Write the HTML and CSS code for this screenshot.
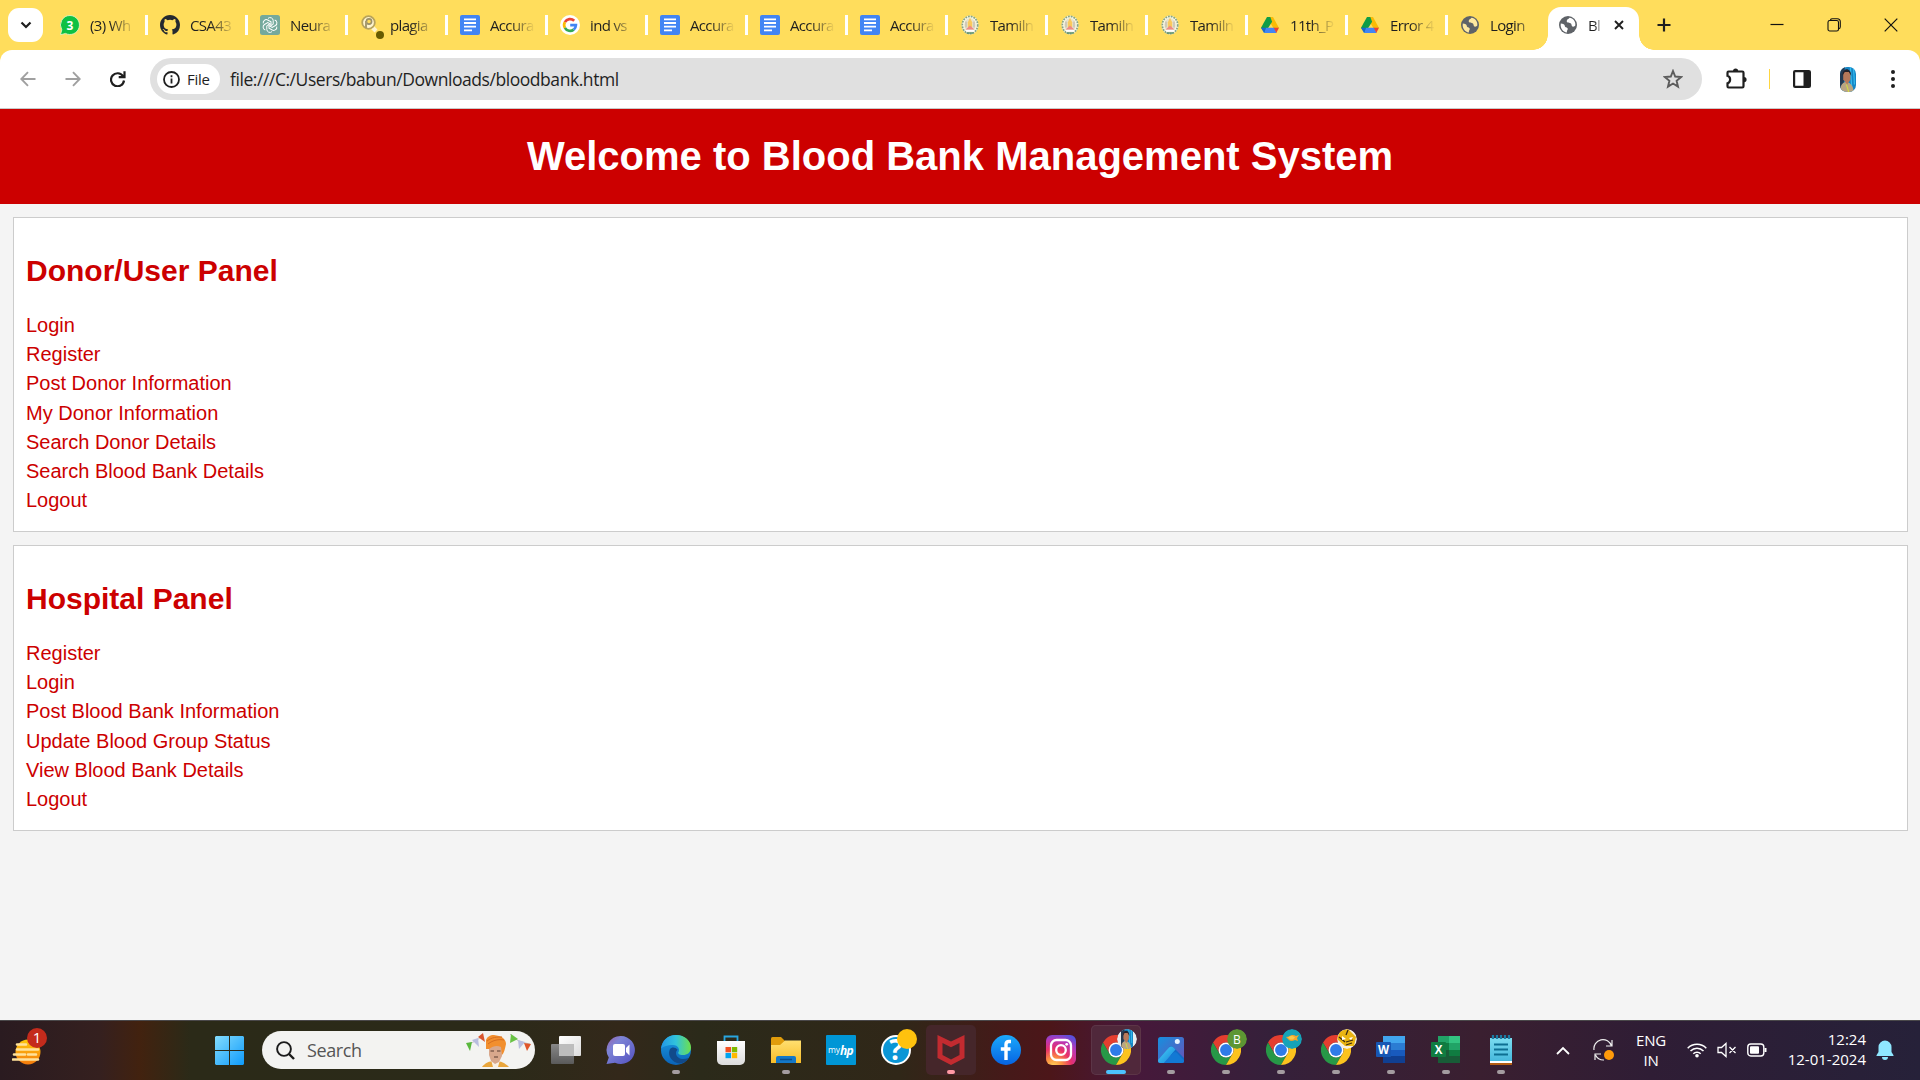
FILE: index.html
```html
<!DOCTYPE html>
<html lang="en">
<head>
<meta charset="utf-8">
<title>Blood Bank Management System</title>
<link rel="stylesheet" href="styles.css">
</head>
<body>
<svg class="defs" aria-hidden="true">
  <defs>
    <linearGradient id="g-win" x1="0" y1="0" x2="1" y2="1"><stop offset="0" stop-color="#83dcfd"/><stop offset="1" stop-color="#0f9bfb"/></linearGradient>
    <linearGradient id="g-sun" x1="0" y1="0" x2="0" y2="1"><stop offset="0" stop-color="#ffc90a"/><stop offset="1" stop-color="#f47a0c"/></linearGradient>
    <linearGradient id="g-chat" x1="0" y1="0" x2="1" y2="1"><stop offset="0" stop-color="#9a5fa8"/><stop offset=".3" stop-color="#7d84d6"/><stop offset="1" stop-color="#5350c0"/></linearGradient>
    <linearGradient id="g-edge" x1="0" y1="0" x2="1" y2="0"><stop offset="0" stop-color="#2296e6"/><stop offset=".5" stop-color="#31c3dc"/><stop offset="1" stop-color="#6ee04b"/></linearGradient>
    <linearGradient id="g-edge2" x1="0" y1="0" x2="0" y2="1"><stop offset="0" stop-color="#1b9de2"/><stop offset="1" stop-color="#0a63b8"/></linearGradient>
    <linearGradient id="g-folder" x1="0" y1="0" x2="0" y2="1"><stop offset="0" stop-color="#ffdf70"/><stop offset="1" stop-color="#f8bd28"/></linearGradient>
    <linearGradient id="g-fb" x1="0" y1="0" x2="0" y2="1"><stop offset="0" stop-color="#1ba9fb"/><stop offset="1" stop-color="#0763e2"/></linearGradient>
    <linearGradient id="g-store" x1="0" y1="0" x2="0" y2="1"><stop offset="0" stop-color="#fff"/><stop offset="1" stop-color="#dcdcdc"/></linearGradient>
    <linearGradient id="g-photo" x1="0" y1="0" x2="1" y2="1"><stop offset="0" stop-color="#1590df"/><stop offset="1" stop-color="#6b51b8"/></linearGradient>
    <linearGradient id="g-hill" x1="0" y1="0" x2="1" y2="1"><stop offset="0" stop-color="#49d2f5"/><stop offset="1" stop-color="#1483dc"/></linearGradient>
    <linearGradient id="g-pane" x1="0" y1="0" x2="1" y2="1"><stop offset="0" stop-color="#fff"/><stop offset="1" stop-color="#dcdcdc"/></linearGradient>
    <linearGradient id="g-pane2" x1="0" y1="0" x2="0" y2="1"><stop offset="0" stop-color="#888"/><stop offset="1" stop-color="#5a5a5a"/></linearGradient>
    <radialGradient id="g-insta" cx=".25" cy="1.05" r="1.15"><stop offset="0" stop-color="#ffd65c"/><stop offset=".25" stop-color="#fc9040"/><stop offset=".52" stop-color="#e8306b"/><stop offset=".78" stop-color="#b837b8"/><stop offset="1" stop-color="#5a50dc"/></radialGradient>
    <linearGradient id="g-note" x1="0" y1="0" x2="0" y2="1"><stop offset="0" stop-color="#7bdcef"/><stop offset="1" stop-color="#44b7dc"/></linearGradient>
    <clipPath id="c-round"><circle cx="10" cy="10" r="10"/></clipPath>
  </defs>
  <symbol id="docs" viewBox="0 0 20 20"><rect width="20" height="20" rx="2" fill="#4285f4"/><path d="M4 4.300h12M4 8h12M4 11.700h12M4 15.400h8" stroke="#fff" stroke-width="1.800"/></symbol>
  <symbol id="emblem" viewBox="0 0 20 20"><ellipse cx="10" cy="10" rx="8.500" ry="9.600" fill="#f8f6e4"/><ellipse cx="10" cy="10" rx="7.700" ry="8.700" fill="none" stroke="#87a583" stroke-width="1.700" stroke-dasharray="1.800 1"/><ellipse cx="10" cy="10" rx="5.800" ry="6.800" fill="#e9e3cd"/><path d="M10 2.800l2.200 4.500V12H7.800V7.300z" fill="#fac95c"/><path d="M6 6.500v6m8-6v6" stroke="#c9c4b4" stroke-width="1.600"/><path d="M5.500 14.500L10 10.500l4.500 4z" fill="#ef8b84"/><path d="M6 15h8v1.600H6z" fill="#fff"/><path d="M6.500 18h7" stroke="#5b8f6c" stroke-width="1.500"/></symbol>
  <symbol id="drive" viewBox="0 0 20 20"><path d="M7 2h6l6 11h-5.700z" fill="#fbbc04"/><path d="M7 2h3.300l1.800 4.700L5 18 1 12.800z" fill="#0f9d46"/><path d="M5.800 12.800h8.800L16.500 18H4z" fill="#4285f4"/><path d="M1 12.800h5L4 18z" fill="#1967d2"/><path d="M13.800 12.800H19L16.300 18z" fill="#ea4335"/></symbol>
  <symbol id="globe" viewBox="0 0 20 20"><circle cx="10" cy="10" r="9" fill="#5f6368"/><path class="land" d="M2.800 8.500c2.200.2 4.200.9 4 2.600-.1 1.500 1.800.8 2.800 2.200.8 1.200-1 2.200-.7 4.200C5 17.200 2 13 2.800 8.500zM11.500 2.800c-1 1.500-2.800 1.500-2.800 3.400 0 1.800 3.200 1 4.300 2.300 1 1.200.2 2.900 2 3.200 1 .1 1.800-.5 2.300-1.200C18 6.500 15 3.300 11.500 2.800z"/></symbol>
  <symbol id="chrome" viewBox="0 0 48 48"><path d="M44.800 12H24A12 12 0 0 0 13.600 30L3.200 12A24 24 0 0 1 44.800 12z" fill="#e43e2f"/><path d="M3.200 12L13.600 30A12 12 0 0 0 34.400 30L24 48A24 24 0 0 1 3.200 12z" fill="#279847"/><path d="M44.800 12H24A12 12 0 0 1 34.400 30L24 48A24 24 0 0 0 44.800 12z" fill="#fcc31e"/><circle cx="24" cy="24" r="12" fill="#fff"/><circle cx="24" cy="24" r="9.500" fill="#2f7be8"/></symbol>
  <symbol id="portrait" viewBox="0 0 20 20" preserveAspectRatio="none"><rect width="20" height="20" fill="#1685c4"/><path d="M0 0h6l-2 20H0z" fill="#263a52"/><path d="M13 0l2 20m2-19l1 13" stroke="#35bdef" stroke-width="1.500"/><path d="M0 20c0-6 4-8 8-8s9 3 9 8z" fill="#baa582"/><path d="M4 4h9v6l-4 4-5-4z" fill="#b87859"/><path d="M3 7c0-7 11-7 11 0l-3-3H6z" fill="#26222b"/><path d="M8 14l3 6" stroke="#d5e33a" stroke-width="1.200"/></symbol>
</svg>

<div class="screen">
  <header class="tabstrip">
    <button class="tab-search"><svg width="12" height="8" viewBox="0 0 12 8"><path d="M1.500 1.500L6 6l4.500-4.500" fill="none" stroke="#1f1f1f" stroke-width="2.200"/></svg></button>
    <div class="tabs">
      <div class="tab"><svg class="fav" viewBox="0 0 20 20"><path d="M10 .5a9.500 9.500 0 1 1-4.500 17.900L.5 19.800l1.300-5A9.500 9.500 0 0 1 10 .5z" fill="#0dc143" stroke="#e9f7cf" stroke-width=".8"/><text class="wa-num" x="10" y="14.500">3</text></svg><span>(3) Wh</span></div>
      <div class="tab"><svg class="fav" viewBox="0 0 16 16"><path fill="#24292f" d="M8 0C3.580 0 0 3.580 0 8c0 3.540 2.290 6.530 5.470 7.590.4.070.55-.17.55-.38 0-.19-.01-.82-.01-1.490-2.010.37-2.530-.49-2.690-.94-.09-.23-.48-.94-.82-1.130-.28-.15-.68-.52-.01-.53.63-.01 1.080.58 1.230.82.72 1.210 1.870.87 2.330.66.07-.52.28-.87.51-1.070-1.780-.2-3.640-.89-3.640-3.950 0-.87.31-1.590.82-2.150-.08-.2-.36-1.020.08-2.120 0 0 .67-.21 2.200.82a7.600 7.600 0 0 1 4 0c1.530-1.040 2.200-.82 2.200-.82.44 1.100.16 1.920.08 2.120.51.56.82 1.270.82 2.150 0 3.070-1.870 3.750-3.650 3.950.29.25.54.73.54 1.480 0 1.070-.01 1.930-.01 2.200 0 .21.15.46.55.38A8.010 8.010 0 0 0 16 8c0-4.420-3.580-8-8-8z"/></svg><span>CSA43</span></div>
      <div class="tab"><svg class="fav" viewBox="0 0 20 20"><rect width="20" height="20" rx="2.500" fill="#75a99c"/><g fill="none" stroke="#fff" stroke-width="1"><g id="petal"><path d="M8 3.400A3.100 3.100 0 0 1 13.200 5.500v3.800L10 11.200"/></g><use href="#petal" transform="rotate(60 10 10)"/><use href="#petal" transform="rotate(120 10 10)"/><use href="#petal" transform="rotate(180 10 10)"/><use href="#petal" transform="rotate(240 10 10)"/><use href="#petal" transform="rotate(300 10 10)"/></g></svg><span>Neura</span></div>
      <div class="tab"><svg class="fav wide" viewBox="0 0 24 24"><path d="M12 12l4 4" stroke="#fff5cf" stroke-width="4"/><circle cx="8.500" cy="7.500" r="6.300" fill="#fff5cf" stroke="#b7a35c" stroke-width="1.800"/><circle cx="9" cy="6.500" r="2.600" fill="#ffdd5c" stroke="#9b9069" stroke-width="1.600"/><path d="M6 6v7" stroke="#a79b70" stroke-width="2"/><circle cx="20" cy="20" r="4" fill="#665b00"/></svg><span>plagia</span></div>
      <div class="tab"><svg class="fav"><use href="#docs"/></svg><span>Accura</span></div>
      <div class="tab"><svg class="fav" viewBox="0 0 20 20"><circle cx="10" cy="10" r="10" fill="#fff"/><g fill="none" stroke-width="2.700"><path d="M14.200 5.800A5.900 5.900 0 0 0 4.900 7.100" stroke="#ea4335"/><path d="M4.900 7.100a5.900 5.900 0 0 0 0 5.800" stroke="#fbbc05"/><path d="M4.900 12.900a5.900 5.900 0 0 0 8.800 1.700" stroke="#34a853"/><path d="M13.700 14.600A5.900 5.900 0 0 0 15.900 10.200H10.200" stroke="#4285f4"/></g></svg><span>ind vs</span></div>
      <div class="tab"><svg class="fav"><use href="#docs"/></svg><span>Accura</span></div>
      <div class="tab"><svg class="fav"><use href="#docs"/></svg><span>Accura</span></div>
      <div class="tab"><svg class="fav"><use href="#docs"/></svg><span>Accura</span></div>
      <div class="tab"><svg class="fav"><use href="#emblem"/></svg><span>Tamiln</span></div>
      <div class="tab"><svg class="fav"><use href="#emblem"/></svg><span>Tamiln</span></div>
      <div class="tab"><svg class="fav"><use href="#emblem"/></svg><span>Tamiln</span></div>
      <div class="tab"><svg class="fav"><use href="#drive"/></svg><span>11th_P</span></div>
      <div class="tab"><svg class="fav"><use href="#drive"/></svg><span>Error 4</span></div>
      <div class="tab last"><svg class="fav"><use href="#globe"/></svg><span>Login</span></div>
      <div class="tab active"><svg class="fav"><use href="#globe"/></svg><span>Bl</span><svg class="close" viewBox="0 0 10 10"><path d="M1 1l8 8M9 1L1 9" stroke="#1f1f1f" stroke-width="1.900"/></svg></div>
    </div>
    <svg class="newtab" viewBox="0 0 14 14"><path d="M7 .5v13M.5 7h13" stroke="#1f1f1f" stroke-width="2.200"/></svg>
    <div class="window-controls">
      <svg width="14" height="14" viewBox="0 0 14 14"><path d="M.5 6.500h13" stroke="#111" stroke-width="1.200"/></svg>
      <svg width="14" height="14" viewBox="0 0 14 14"><g fill="none" stroke="#111" stroke-width="1.100"><rect x="1" y="2.500" width="10.500" height="10.500" rx="1.800"/><path d="M3.500 2.500C3.500 1 4.500.7 5.500.7h4.700c2 0 3.100 1.100 3.100 3.100v5c0 1-.5 1.800-1.500 2"/></g></svg>
      <svg width="14" height="14" viewBox="0 0 14 14"><path d="M.7.700l12.600 12.600M13.300.700L.7 13.300" stroke="#111" stroke-width="1.200"/></svg>
    </div>
  </header>

  <div class="toolbar-back">
    <nav class="toolbar">
      <div class="nav-icons">
        <svg width="16" height="16" viewBox="0 0 16 16"><path d="M15.500 8H1.500M8 1.200L1.300 8 8 14.800" fill="none" stroke="#a0a0a0" stroke-width="1.900"/></svg>
        <svg width="16" height="16" viewBox="0 0 16 16"><path d="M.5 8h14M8 1.200L14.700 8 8 14.800" fill="none" stroke="#a0a0a0" stroke-width="1.900"/></svg>
        <svg width="16" height="16" viewBox="0 0 16 16"><path d="M13 5.200A6.500 6.500 0 1 0 14 9.500M14.500.3v5.800H8.700" fill="none" stroke="#1f1f1f" stroke-width="2.200"/></svg>
      </div>
      <div class="omnibox">
        <div class="chip"><svg width="17" height="17" viewBox="0 0 17 17"><circle cx="8.500" cy="8.500" r="7.500" fill="none" stroke="#1f1f1f" stroke-width="1.800"/><path d="M8.500 7.500v5M8.500 4.300v1.900" stroke="#1f1f1f" stroke-width="1.800"/></svg><span>File</span></div>
        <span class="url">file:///C:/Users/babun/Downloads/bloodbank.html</span>
        <svg class="star" width="20" height="20" viewBox="0 0 20 20"><path d="M10 2l2.200 5.500 5.900.5-4.500 3.800 1.400 5.800L10 14.500l-5 3.100 1.400-5.800L1.900 8l5.900-.5z" fill="none" stroke="#5c5c5c" stroke-width="1.900"/></svg>
      </div>
      <div class="actions">
        <svg width="22" height="22" viewBox="0 0 22 22"><path d="M3.500 3.500h13.800c.7 0 1.200.5 1.200 1.200v13.600c0 .7-.5 1.200-1.200 1.200H3.500c-.7 0-1-.5-1-1.200v-3c3.500-1 3.500-6.500 0-7.500V4.700c0-.7.300-1.200 1-1.200z" fill="none" stroke="#1f1f1f" stroke-width="2.200"/><path d="M8 3a2.600 2.600 0 0 1 5.200 0zM19 9a2.600 2.600 0 0 1 0 5.200z" fill="#1f1f1f"/></svg>
        <i class="rule"></i>
        <svg width="18" height="18" viewBox="0 0 18 18"><rect x="1.100" y="1.100" width="15.800" height="15.800" rx="1" fill="none" stroke="#1f1f1f" stroke-width="2.200"/><path d="M10.500 1H17v16h-6.500z" fill="#1f1f1f"/></svg>
        <svg class="avatar"><use href="#portrait"/></svg>
        <svg class="dots" width="6" height="20" viewBox="0 0 6 20"><g fill="#1f1f1f"><circle cx="3" cy="3" r="2"/><circle cx="3" cy="10" r="2"/><circle cx="3" cy="17" r="2"/></g></svg>
      </div>
    </nav>
  </div>

  <main class="page">
    <h1 class="banner">Welcome to Blood Bank Management System</h1>
    <section class="panel">
      <h2>Donor/User Panel</h2>
      <ul>
        <li><a>Login</a></li>
        <li><a>Register</a></li>
        <li><a>Post Donor Information</a></li>
        <li><a>My Donor Information</a></li>
        <li><a>Search Donor Details</a></li>
        <li><a>Search Blood Bank Details</a></li>
        <li><a>Logout</a></li>
      </ul>
    </section>
    <section class="panel">
      <h2>Hospital Panel</h2>
      <ul>
        <li><a>Register</a></li>
        <li><a>Login</a></li>
        <li><a>Post Blood Bank Information</a></li>
        <li><a>Update Blood Group Status</a></li>
        <li><a>View Blood Bank Details</a></li>
        <li><a>Logout</a></li>
      </ul>
    </section>
  </main>

  <footer class="taskbar">
    <svg class="widgets" width="36" height="40" viewBox="0 0 36 40"><circle cx="16" cy="24" r="12.500" fill="url(#g-sun)"/><path d="M5 16.500h9M5 21.500h21M2 26.500h11m3 0h8M1 31.500h25" stroke="#ffe29a" stroke-width="2.600" stroke-linecap="round"/><circle cx="25" cy="10" r="10" fill="#c42b1c"/><text class="badge-num" x="25" y="15">1</text></svg>
    <svg class="start" width="29" height="29" viewBox="0 0 29 29"><path d="M1 0h13v14H0V1zM15 0h13l1 1v13H15zM0 15h14v14H1l-1-1zM15 15h14v13l-1 1H15z" fill="url(#g-win)"/></svg>
    <div class="search">
      <svg width="19" height="19" viewBox="0 0 19 19"><circle cx="8" cy="8" r="6.900" fill="none" stroke="#1b1b1b" stroke-width="1.900"/><path d="M13 13l5 5" stroke="#1b1b1b" stroke-width="2.400"/></svg>
      <span>Search</span>
      <svg class="art" width="66" height="38" viewBox="0 0 66 38"><path d="M1 13Q12 11 17 3M44 3q6 8 20 10" fill="none" stroke="#aaa" stroke-width=".7"/><path d="M0 12l6-1-2 9z" fill="#59b83d"/><path d="M6 9l6-2 1 9z" fill="#b9bddf"/><path d="M12 6l5-4 2 9z" fill="#d9562f"/><path d="M45 3l7 5-8 4z" fill="#6ac345"/><path d="M52 9l7 2-6 7z" fill="#b9bddf"/><path d="M58 12l7 1-4 7z" fill="#e0552b"/><path d="M16 36c3-4 7-6 13-6s10 2 14 6z" fill="#e9a63c"/><path d="M25 29h9l-2 7h-5z" fill="#f8efe4"/><path d="M23 15h13v10l-3 6-4 2-4-3-2-6z" fill="#d9a88c"/><path d="M23 18h-3V9c1-3 4-5 8-5l5 1c4 1 7 4 7 8-1 5-2 9-4 11l-1-8c-4-2-8-1-12 2z" fill="#f28f2e"/><path d="M22 13c5-4 11-5 16-4M21 10c5-4 10-4 15-4" fill="none" stroke="#d66e1f"/><path d="M24.500 20h3.500m3 0h3.500M28 26h4" stroke="#5b3c31" stroke-width="1.200"/></svg>
    </div>
    <div class="apps">
      <div class="app"><svg viewBox="0 0 30 30"><rect x="8" y="1" width="22" height="20" rx="1" fill="url(#g-pane)"/><rect y="9" width="23" height="20" rx="1" fill="url(#g-pane2)"/><path d="M8 9h15v12H8z" fill="#bdbdbd"/></svg></div>
      <div class="app"><svg viewBox="0 0 30 30"><path d="M15 1a14 14 0 1 1-6 26.700L.5 29l2.300-6.500A14 14 0 0 1 15 1z" fill="url(#g-chat)"/><rect x="7" y="9" width="12" height="12" rx="2" fill="#fff"/><path d="M20 13l3.500-3.500v11L20 17z" fill="#fff"/></svg></div>
      <div class="app run"><svg viewBox="0 0 30 30"><circle cx="15" cy="15" r="15" fill="url(#g-edge2)"/><path d="M0 14C1 5 7 0 15 0c9 0 15 6 15 12.500 0 5-4 7.500-8 7.500-4 0-5.500-1.500-4.500-3 1.500-2 0-7-5.500-7C6 10 1 12 0 14z" fill="url(#g-edge)"/><path d="M9 14c-2 4-1 11 7 14 5 1.500 9-1 11.500-5-6 2.500-12 .5-12.500-4.500 0-1.700.6-2.700 1.600-3.700C14 11.500 10.500 12 9 14z" fill="#114a8b"/></svg></div>
      <div class="app"><svg viewBox="0 0 30 30"><path d="M8.500 8V1.500h13V8" fill="none" stroke="#28a6e0" stroke-width="1.800"/><path d="M1 6h28v19a5 5 0 0 1-5 5H6a5 5 0 0 1-5-5z" fill="url(#g-store)"/><path d="M9.500 12H15v5.300H9.500z" fill="#f25022"/><path d="M15.800 12h5.400v5.300h-5.400z" fill="#7fba00"/><path d="M9.500 18H15v5.200H9.500z" fill="#00a4ef"/><path d="M15.800 18h5.400v5.200h-5.400z" fill="#ffb900"/></svg></div>
      <div class="app run"><svg viewBox="0 0 30 30"><path d="M0 3.500Q0 2 1.500 2H10l4 4v5H0z" fill="#e09c0b"/><path d="M0 10h9l5-4.500h16V28H0z" fill="url(#g-folder)"/><path d="M5 28v-5q0-2 2-2h16q2 0 2 2v5z" fill="#1478c8"/><path d="M9 24.500h12" stroke="#0b4e8e" stroke-width="1.500"/></svg></div>
      <div class="app"><svg viewBox="0 0 30 30"><rect width="30" height="30" rx="1" fill="#0096d6"/><text class="hp-my" x="2" y="18">my</text><text class="hp" x="14" y="19.500">hp</text></svg></div>
      <div class="app"><svg viewBox="0 0 30 30"><circle cx="15" cy="15" r="14" fill="#0b96d6" stroke="#fff" stroke-width="2"/><text class="help" x="15" y="25">?</text></svg><i class="badge gold"></i></div>
      <div class="app run alert"><svg viewBox="0 0 30 30"><path d="M1.500 0L15 6.500 28.500 0v23L15 30 1.500 23zM6.500 8v12L15 24.500 23.500 20V8L15 12.200z" fill="#c22b30" fill-rule="evenodd"/></svg></div>
      <div class="app"><svg viewBox="0 0 30 30"><circle cx="15" cy="15" r="15" fill="url(#g-fb)"/><path d="M20 6.500h-2c-2 0-3 1-3 3V25M9.800 14h9.700" fill="none" stroke="#fff" stroke-width="3.400"/></svg></div>
      <div class="app"><svg viewBox="0 0 30 30"><rect width="30" height="30" rx="6" fill="url(#g-insta)"/><g fill="none" stroke="#fff" stroke-width="2.300"><rect x="5" y="5" width="20" height="20" rx="5.500"/><circle cx="15" cy="15" r="4.800"/></g><circle cx="20.700" cy="9.300" r="1.400" fill="#fff"/></svg></div>
      <div class="app run current"><svg><use href="#chrome"/></svg><svg class="badge" viewBox="0 0 20 20"><circle cx="10" cy="10" r="10" fill="#e8edf0"/><g clip-path="url(#c-round)"><use href="#portrait" x="4" y="0" width="12" height="20"/></g></svg></div>
      <div class="app run"><svg viewBox="0 0 30 30"><rect x="2" y="2" width="26" height="26" rx="2.500" fill="url(#g-photo)"/><path d="M13 12q2-1.500 4 0l11 11v2.500a2.500 2.500 0 0 1-2.500 2.500h-5L11 16z" fill="#116ac6"/><path d="M2.500 24.500L13 12.500q2-2 4.500 0l2 2L8 28H4.500A2.500 2.500 0 0 1 2 25.500z" fill="url(#g-hill)"/><path d="M8 28L17 18q2-2 4 0l7 7.500a2.500 2.500 0 0 1-2.500 2.500z" fill="#1279d4"/><circle cx="21.300" cy="6.500" r="2.500" fill="#e6f4ff"/></svg></div>
      <div class="app run"><svg><use href="#chrome"/></svg><svg class="badge" viewBox="0 0 20 20"><circle cx="10" cy="10" r="10" fill="#5d9633"/><text class="badge-b" x="10" y="14.500">B</text></svg></div>
      <div class="app run"><svg><use href="#chrome"/></svg><svg class="badge" viewBox="0 0 20 20"><circle cx="10" cy="10" r="10" fill="#16a3b8"/><path d="M4 8l3-.5c2-2 5-2 7-.5l3-1-2 3 1 3-3-1c-3 1.500-5 1-6 0z" fill="#f2a52c"/><path d="M6 8.500c2-2 5-2 7 0l-2 2H8z" fill="#f6c84a"/></svg></div>
      <div class="app run"><svg><use href="#chrome"/></svg><svg class="badge" viewBox="0 0 20 20"><g clip-path="url(#c-round)"><path fill="#f5efe0" d="M0 0h20v20H0z"/><path d="M3 2l8-2 8 8-2 9-9 0-8-7z" fill="#eab512"/><path d="M2 8l6 5M9 13l7-2M9 16l6-2M11 1L9 6" stroke="#3c2c13" stroke-width="1.300"/><path d="M5 7l4 3-4 1zM12 9l4-1-2 3z" fill="#fff"/></g></svg></div>
      <div class="app run"><svg viewBox="0 0 30 30"><path d="M7 1h22v7H7z" fill="#41a5ee"/><path d="M7 8h22v7H7z" fill="#2b7cd3"/><path d="M7 15h22v6H7z" fill="#185abd"/><path d="M7 21h22v7H7z" fill="#103f91"/><rect y="7" width="15" height="15" rx="1" fill="#1757b4"/><text class="office" x="7.500" y="18.500">W</text></svg></div>
      <div class="app run"><svg viewBox="0 0 30 30"><path d="M7 1h11v7H7z" fill="#21a366"/><path d="M18 1h11v7H18z" fill="#33c481"/><path d="M7 8h11v7H7z" fill="#107c41"/><path d="M18 8h11v7H18z" fill="#21a366"/><path d="M18 15h11v6H18z" fill="#107c41"/><path d="M7 15h11v13H7zM18 21h11v7H18z" fill="#185c37"/><rect y="7" width="15" height="15" rx="1" fill="#107c41"/><text class="office" x="7.500" y="18.500">X</text></svg></div>
      <div class="app run"><svg viewBox="0 0 30 30"><path d="M4 3h22v24H4z" fill="url(#g-note)"/><path d="M4 26h22v2H4z" fill="#fff"/><path d="M4 28h22v2H4z" fill="#b45d13"/><path d="M8 9.500h14M8 14.500h14M8 19.500h14" stroke="#0d6f92" stroke-width="1.900"/><path d="M7 0v4M11 0v4M15 0v4M19 0v4M23 0v4" stroke="#1a7ba3" stroke-width="2.300"/></svg></div>
    </div>
    <div class="tray">
      <svg class="chev" width="14" height="9" viewBox="0 0 14 9"><path d="M1 8l6-6 6 6" fill="none" stroke="#fff" stroke-width="1.800"/></svg>
      <svg class="sync" width="22" height="22" viewBox="0 0 22 22"><path d="M1 11A9 9 0 0 1 18.500 7M19 1v6h-6M2 21v-6h6M2.500 16A9 9 0 0 0 11 21" fill="none" stroke="#eee" stroke-width="1.200"/><circle cx="16" cy="16" r="5" fill="#ff9a0a"/></svg>
      <div class="lang"><span>ENG</span><span>IN</span></div>
      <div class="status">
        <svg width="20" height="16" viewBox="0 0 20 16"><g fill="none" stroke="#fff" stroke-width="1.500"><path d="M.7 6.200a13 13 0 0 1 18.600 0M3.500 9a9 9 0 0 1 13 0M6.300 11.800a5 5 0 0 1 7.400 0"/></g><circle cx="10" cy="13.700" r="1.800" fill="#fff"/></svg>
        <svg width="20" height="16" viewBox="0 0 20 16"><path d="M1 5.500h3.500L9 1.500v13L4.500 10.500H1zM12.500 5l6 6M18.500 5l-6 6" fill="none" stroke="#fff" stroke-width="1.300"/></svg>
        <svg width="20" height="14" viewBox="0 0 20 14"><rect x=".8" y="1" width="16" height="12" rx="3" fill="none" stroke="#fff" stroke-width="1.400"/><rect x="3" y="3.200" width="9" height="7.600" rx="1" fill="#fff"/><path d="M18.500 5v4" stroke="#fff" stroke-width="2"/></svg>
      </div>
      <div class="clock"><span>12:24</span><span>12-01-2024</span></div>
      <svg class="bell" width="18" height="20" viewBox="0 0 18 20"><path d="M9 .5a6.500 6.500 0 0 1 6.500 6.500v5l2 3.200v.8H.5v-.8l2-3.200V7A6.500 6.500 0 0 1 9 .5zM6 17h6a3 3 0 0 1-6 0z" fill="#8fe7ff"/></svg>
    </div>
  </footer>
</div>
</body>
</html>
```
FILE: styles.css
```css
* { box-sizing: border-box; }
body { margin: 0; font-family: "Open Sans", "Noto Sans", sans-serif; color: #1f1f1f; overflow: hidden; }
svg { display: block; flex: none; }
.defs { position: absolute; width: 0; height: 0; }
.screen { width: 1920px; height: 1080px; display: flex; flex-direction: column; background: #f4f4f4; }

/* Tab strip */
.tabstrip { height: 50px; flex: none; background: #ffdd5c; display: flex; align-items: center; padding-left: 8px; }
.tab-search { width: 35px; height: 34px; border: 0; border-radius: 11px; background: #fff; padding: 0; display: grid; place-items: center; }
.tabs { display: flex; align-items: center; margin-left: 5px; height: 50px; }
.tab { width: 100px; height: 20px; padding-left: 12px; display: flex; align-items: center; border-right: 3px solid #fff; }
.tab span { width: 48px; margin-left: 10px; white-space: nowrap; font-size: 15px; line-height: 20px; letter-spacing: -.65px; -webkit-mask-image: linear-gradient(90deg, #000 20px, transparent 45px); mask-image: linear-gradient(90deg, #000 20px, transparent 45px); }
.fav { width: 20px; height: 20px; }
.fav.wide { width: 24px; height: 24px; margin: 4px -4px 0 0; }
.land { fill: var(--land, #ffe9a0); }
.tab.last { border: 0; }
.tab.last span { -webkit-mask-image: linear-gradient(90deg, #000 25px, rgba(0, 0, 0, .4) 38px); mask-image: linear-gradient(90deg, #000 25px, rgba(0, 0, 0, .4) 38px); }
.tab.active { --land: #fff; position: relative; width: 91px; height: 43px; margin-top: 7px; padding: 0 0 7px 10px; border: 0; background: #fff; border-radius: 13px 13px 0 0; }
.tab.active span { width: 14px; -webkit-mask-image: linear-gradient(90deg, #000 6px, rgba(0, 0, 0, .3) 13px); mask-image: linear-gradient(90deg, #000 6px, rgba(0, 0, 0, .3) 13px); }
.tab.active::before, .tab.active::after { content: ""; position: absolute; bottom: 0; width: 15px; height: 15px; }
.tab.active::before { left: -15px; background: radial-gradient(circle at 0 0, transparent 14.5px, #fff 15px); }
.tab.active::after { right: -15px; background: radial-gradient(circle at 100% 0, transparent 14.5px, #fff 15px); }
.close { width: 10px; height: 10px; margin-left: 12px; }
.newtab { width: 14px; height: 14px; margin-left: 18px; }
.window-controls { display: flex; gap: 43px; margin-left: auto; padding-right: 22px; }
.wa-num { font: bold 12px "Open Sans", sans-serif; fill: #fff; text-anchor: middle; }

/* Toolbar */
.toolbar-back { height: 59px; flex: none; background: #ffdd5c; }
.toolbar { height: 59px; background: #fff; border-radius: 12px 12px 0 0; border-bottom: 1px solid #c9c9c9; display: flex; align-items: center; padding-left: 20px; }
.nav-icons { display: flex; gap: 29px; width: 130px; }
.omnibox { width: 1552px; height: 42px; border-radius: 21px; background: #e0e0e0; display: flex; align-items: center; padding: 0 19px 0 7px; }
.chip { width: 63px; height: 30px; border-radius: 15px; background: #fff; display: flex; align-items: center; gap: 7px; padding-left: 6px; font-size: 15px; letter-spacing: -.3px; }
.url { margin-left: 10px; font-size: 17.5px; letter-spacing: -.44px; white-space: nowrap; }
.star { margin-left: auto; }
.actions { flex: 1; display: flex; align-items: center; padding-left: 23px; }
.rule { width: 1px; height: 20px; margin: 0 23px 0 22px; background: #ffd640; }
.avatar { width: 16px; height: 25px; margin-left: 29px; border-radius: 7px; }
.dots { margin-left: 34px; }

/* Blood bank page */
.page { flex: 1; min-height: 0; background: #f4f4f4; font-family: Arial, "Liberation Sans", sans-serif; font-size: 20px; color: #c00; }
.banner { margin: 0; height: 95px; padding: 25px; line-height: 45px; font-size: 40px; text-align: center; background: #c00; color: #fff; }
.panel { margin: 12.5px; padding: 12.5px; border: 1px solid #ccc; background: #fff; }
.panel h2 { margin: 24.4px 0 25.4px; font-size: 30px; line-height: 34px; }
.panel ul { list-style: none; margin: 0; padding: 0; }
.panel li { line-height: 23px; margin-bottom: 6.25px; }

/* Taskbar */
.taskbar { height: 60px; flex: none; display: flex; align-items: center; box-shadow: inset 0 1px #4a484a; color: #fff; background: linear-gradient(90deg, #2a1b20 0, #35201f 100px, #42220f 140px, #2b2a18 190px, #2b2a19 500px, #33281a 620px, #2b2a1a 700px, #302718 900px, #461919 1010px, #4c1619 1050px, #47183a 1130px, #35203a 1270px, #3a1f30 1480px, #2f1d35 1650px, #262139 1920px); }
.widgets { margin: -4px 0 0 12px; }
.start { margin-left: 167px; }
.search { width: 273px; height: 38px; margin-left: 18px; border-radius: 19px; background: #f3f3f1; display: flex; align-items: center; padding: 0 3px 0 14px; color: #555; font-size: 18px; letter-spacing: -.4px; }
.search span { margin-left: 12px; }
.art { margin-left: auto; }
.apps { display: flex; gap: 5px; margin-left: 6px; }
.app { position: relative; width: 50px; height: 50px; border-radius: 5px; padding: 10px; }
.app > svg { width: 30px; height: 30px; }
.app > .badge { position: absolute; left: 26px; top: 4px; width: 20px; height: 20px; border-radius: 50%; }
.gold { background: #ffc20e; }
.run::after { content: ""; position: absolute; left: 21px; bottom: 1px; width: 8px; height: 4px; border-radius: 2px; background: #a49ca0; }
.alert { background: #45262a; }
.alert::after { background: #ff99a4; }
.current { background: #50283b; box-shadow: inset 0 0 0 1px #5c3547; }
.current::after { left: 15px; width: 20px; background: #4cc2ff; }
.badge-num { font: 15px "Open Sans", sans-serif; fill: #fff; text-anchor: middle; }
.badge-b { font: 12px "Open Sans", sans-serif; fill: #fff; text-anchor: middle; }
.hp-my { font: 8.5px "Open Sans", sans-serif; fill: #fff; }
.hp { font: italic bold 12px "Open Sans", sans-serif; fill: #fff; letter-spacing: -.8px; }
.help { font: bold 28px "Open Sans", sans-serif; fill: #fff; text-anchor: middle; }
.office { font: bold 11.5px "Open Sans", sans-serif; fill: #fff; text-anchor: middle; }
.tray { flex: 1; display: flex; align-items: center; padding-left: 30px; font-size: 15px; line-height: 20px; }
.sync { margin-left: 23px; }
.lang { width: 36px; margin-left: 18px; display: flex; flex-direction: column; align-items: center; letter-spacing: -.2px; }
.status { display: flex; align-items: center; gap: 10px; margin-left: 18px; }
.clock { width: 90px; margin: -2px 0 0 9px; display: flex; flex-direction: column; align-items: flex-end; }
.bell { margin-left: 10px; }
```
